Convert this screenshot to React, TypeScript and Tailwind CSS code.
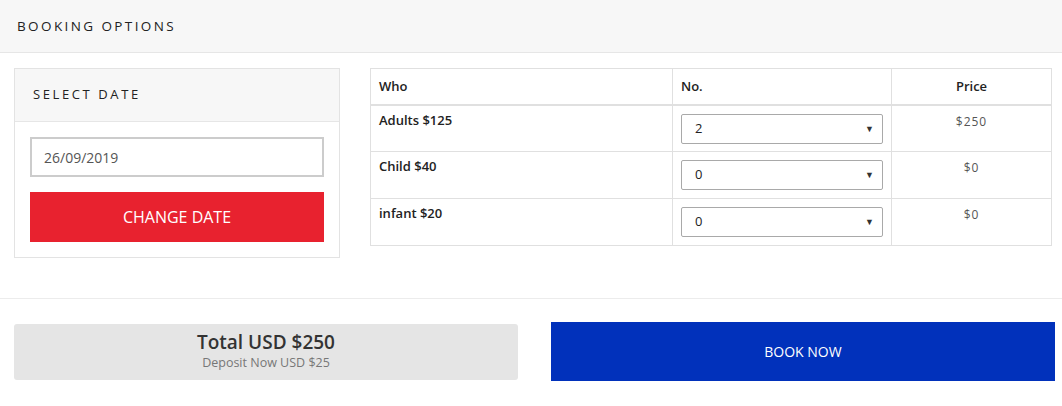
const rows = [
  { who: 'Adults $125', qty: '2', price: '$250' },
  { who: 'Child $40', qty: '0', price: '$0' },
  { who: 'infant $20', qty: '0', price: '$0' },
];

function QtySelect({ value }: { value: string }) {
  return (
    <div className="flex h-[30px] w-full items-center justify-between rounded-[2px] border border-[#a9a9a9] bg-white pl-[13px] pr-[8px] text-[13px] text-[#222]">
      <span>{value}</span>
      <span className="text-[9px] text-[#333]">▼</span>
    </div>
  );
}

export default function App() {
  return (
    <div className="h-[406px] w-[1062px] bg-white font-['Open_Sans',sans-serif] text-[#222]">
      <div className="flex h-[53px] items-center border-b border-[#e6e6e6] bg-[#f7f7f7] px-[17px]">
        <h2 className="text-[13.5px] uppercase tracking-[2.4px] text-[#222]">Booking Options</h2>
      </div>

      <div className="flex gap-[30px] pl-[14px] pr-[10px] pt-[15px]">
        <div className="h-[190px] w-[326px] shrink-0 border border-[#e3e3e3]">
          <div className="flex h-[53px] items-center border-b border-[#e6e6e6] bg-[#f7f7f7] px-[18px]">
            <h3 className="text-[13px] uppercase tracking-[2.6px]">Select Date</h3>
          </div>
          <div className="flex flex-col gap-[15px] px-[15px] pt-[15px]">
            <div className="flex h-[40px] items-center border-2 border-[#cccccc] px-[12px] text-[14px] text-[#555]">
              26/09/2019
            </div>
            <button className="h-[50px] w-full bg-[#e8222f] text-[16px] text-white">CHANGE DATE</button>
          </div>
        </div>

        <table className="h-fit w-[682px] border-collapse text-[13px]">
          <thead>
            <tr className="h-[36px] border-b-2 border-[#e0e0e0]">
              <th className="w-[302px] border border-[#e0e0e0] px-[8px] text-left font-semibold">Who</th>
              <th className="w-[219px] border border-[#e0e0e0] px-[8px] text-left font-semibold">No.</th>
              <th className="border border-[#e0e0e0] px-[8px] text-center font-semibold">Price</th>
            </tr>
          </thead>
          <tbody>
            {rows.map((r) => (
              <tr key={r.who} className="h-[47px]">
                <td className="border border-[#e0e0e0] px-[8px] pb-[17px] pt-[5px] align-top font-semibold">{r.who}</td>
                <td className="border border-[#e0e0e0] px-[8px] pt-[8px] align-top">
                  <QtySelect value={r.qty} />
                </td>
                <td className="border border-[#e0e0e0] px-[8px] pt-[7px] text-center align-top text-[12px] tracking-[1px] text-[#555]">
                  {r.price}
                </td>
              </tr>
            ))}
          </tbody>
        </table>
      </div>

      <div className="mt-[40px] border-t border-[#ececec]" />

      <div className="flex items-center gap-[33px] pl-[14px] pt-[23px]">
        <div className="flex h-[56px] w-[504px] flex-col items-center justify-center rounded-[3px] bg-[#e5e5e5] pb-[2px]">
          <div className="text-[19px] font-semibold leading-[24px] text-[#333]">Total USD $250</div>
          <div className="text-[12.5px] leading-[17px] text-[#777]">Deposit Now USD $25</div>
        </div>
        <button className="h-[59px] w-[504px] bg-[#0131bb] text-[14px] text-white">BOOK NOW</button>
      </div>
    </div>
  );
}
